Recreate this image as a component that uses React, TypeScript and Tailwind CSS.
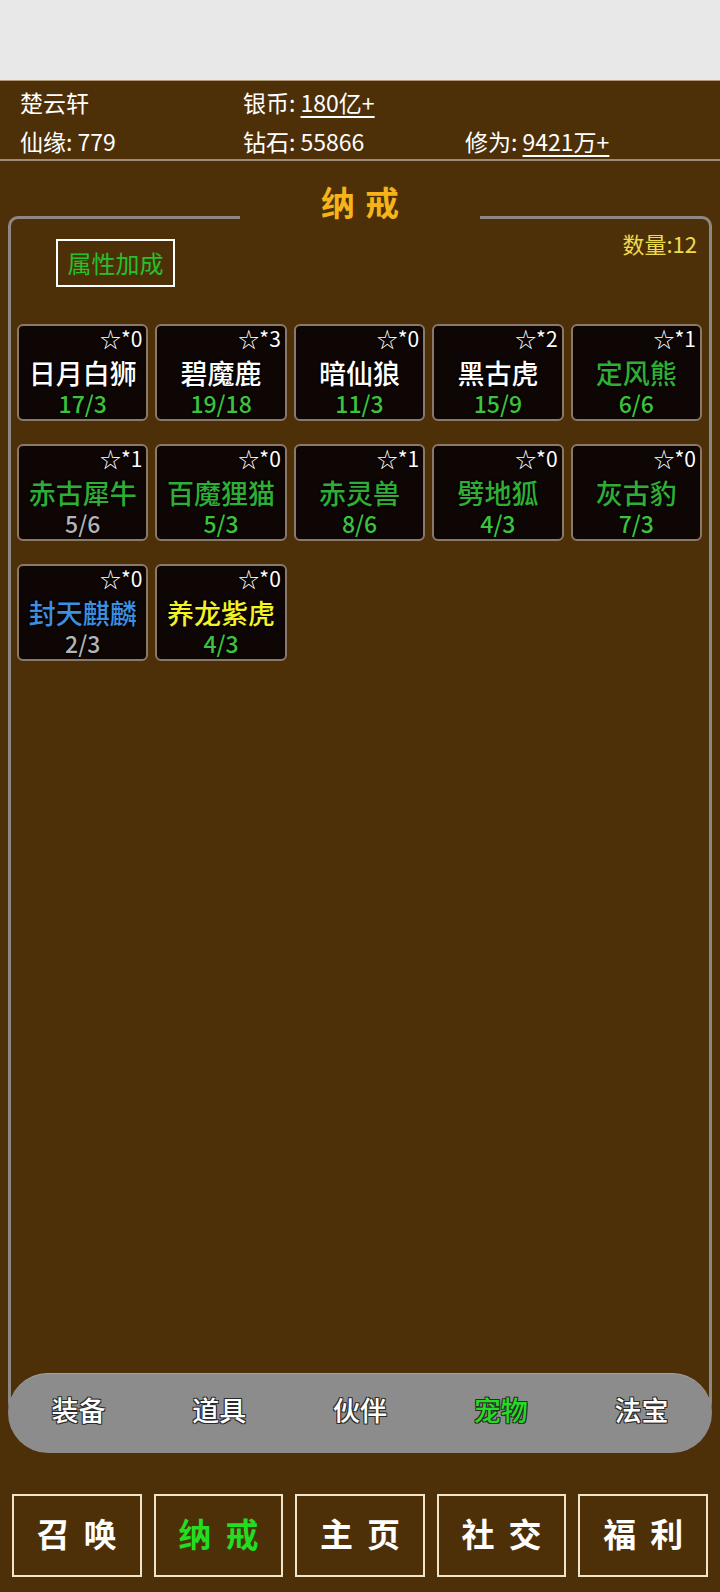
const pets = [
  { star: 0, name: '日月白狮', nameColor: 'text-white', count: '17/3', countColor: 'text-[#3cc23c]' },
  { star: 3, name: '碧魔鹿', nameColor: 'text-white', count: '19/18', countColor: 'text-[#3cc23c]' },
  { star: 0, name: '暗仙狼', nameColor: 'text-white', count: '11/3', countColor: 'text-[#3cc23c]' },
  { star: 2, name: '黑古虎', nameColor: 'text-white', count: '15/9', countColor: 'text-[#3cc23c]' },
  { star: 1, name: '定风熊', nameColor: 'text-[#2fae35]', count: '6/6', countColor: 'text-[#3cc23c]' },
  { star: 1, name: '赤古犀牛', nameColor: 'text-[#2fae35]', count: '5/6', countColor: 'text-[#b4b4b4]' },
  { star: 0, name: '百魔狸猫', nameColor: 'text-[#2fae35]', count: '5/3', countColor: 'text-[#3cc23c]' },
  { star: 1, name: '赤灵兽', nameColor: 'text-[#2fae35]', count: '8/6', countColor: 'text-[#3cc23c]' },
  { star: 0, name: '劈地狐', nameColor: 'text-[#2fae35]', count: '4/3', countColor: 'text-[#3cc23c]' },
  { star: 0, name: '灰古豹', nameColor: 'text-[#2fae35]', count: '7/3', countColor: 'text-[#3cc23c]' },
  { star: 0, name: '封天麒麟', nameColor: 'text-[#3d8fe0]', count: '2/3', countColor: 'text-[#b4b4b4]' },
  { star: 0, name: '养龙紫虎', nameColor: 'text-[#f2f224]', count: '4/3', countColor: 'text-[#3cc23c]' },
];

const tabs = ['装备', '道具', '伙伴', '宠物', '法宝'];
const navs = ['召唤', '纳戒', '主页', '社交', '福利'];

function PetCard({ pet }: { pet: (typeof pets)[number] }) {
  return (
    <div className="h-[97px] bg-[#0e0505] border-2 border-[#8a7868] rounded-[6px] flex flex-col [text-shadow:0_0_2px_#000,0_0_2px_#000]">
      <div className="h-[26px] pr-1 text-right text-[21px] leading-[24px] text-white">☆*{pet.star}</div>
      <div className={`mt-[5px] h-[32px] text-center text-[27px] leading-[32px] font-medium ${pet.nameColor}`}>{pet.name}</div>
      <div className={`h-[28px] text-center text-[23px] leading-[28px] font-medium ${pet.countColor}`}>{pet.count}</div>
    </div>
  );
}

export default function App() {
  return (
    <div className="w-[720px] h-[1592px] bg-[#4e3008] font-['Noto_Sans_CJK_SC','Noto_Sans',sans-serif] overflow-hidden">
      <div className="h-[80px] bg-[#e8e8e8]" />

      <header className="border-t border-[#b09878] text-white text-[23px] pl-5">
        <div className="flex h-[42px] items-center">
          <div className="w-[223px]">楚云轩</div>
          <div className="w-[222px]">
            银币: <span className="underline underline-offset-4">180亿+</span>
          </div>
        </div>
        <div className="flex h-[36px] items-center">
          <div className="w-[223px]">仙缘: 779</div>
          <div className="w-[222px]">钻石: 55866</div>
          <div>
            修为: <span className="underline underline-offset-4">9421万+</span>
          </div>
        </div>
      </header>
      <div className="h-[2px] bg-[#9c8c78]" />

      <section className="relative mx-2 mt-[55px] h-[1197px] border-[3px] border-[#8c8884] rounded-[10px]">
        <div className="absolute left-1/2 -translate-x-1/2 -top-[37px] w-[240px] h-[40px] bg-[#4e3008] text-center text-[34px] leading-[40px] font-bold tracking-[10px] pl-[10px] text-[#f4b41a]">
          纳戒
        </div>

        <div className="flex justify-between items-start pt-[20px] pl-[45px] pr-[12px]">
          <button className="w-[119px] h-[48px] border-2 border-white text-[#25c02c] text-[24px] leading-[44px]">属性加成</button>
          <div className="text-[#ecdc4c] text-[22px] leading-[30px] -mt-[11px]">数量:12</div>
        </div>

        <div className="grid grid-cols-5 gap-x-[7px] gap-y-[23px] mt-[37px] pl-[6px] pr-[7px]">
          {pets.map((p) => (
            <PetCard key={p.name} pet={p} />
          ))}
        </div>
      </section>

      <nav className="relative z-10 mx-2 -mt-[40px] h-[80px] rounded-[40px] bg-[#8c8c8c] border-t border-[#a4a4a4] flex items-center pb-[6px]">
        {tabs.map((t) => (
          <div
            key={t}
            className={`flex-1 text-center text-[27px] font-medium [text-shadow:1px_1px_0_#2a2a2a,-1px_-1px_0_#2a2a2a,1px_-1px_0_#2a2a2a,-1px_1px_0_#2a2a2a] ${
              t === '宠物' ? 'text-[#22dd22]' : 'text-white'
            }`}
          >
            {t}
          </div>
        ))}
      </nav>

      <div className="flex gap-[12px] px-3 mt-[41px]">
        {navs.map((n) => (
          <button
            key={n}
            className={`flex-1 h-[83px] border-2 border-[#efe4cc] text-[33px] font-bold tracking-[14px] pl-[14px] pb-[4px] ${
              n === '纳戒' ? 'text-[#22dd22]' : 'text-white'
            }`}
          >
            {n}
          </button>
        ))}
      </div>
    </div>
  );
}
